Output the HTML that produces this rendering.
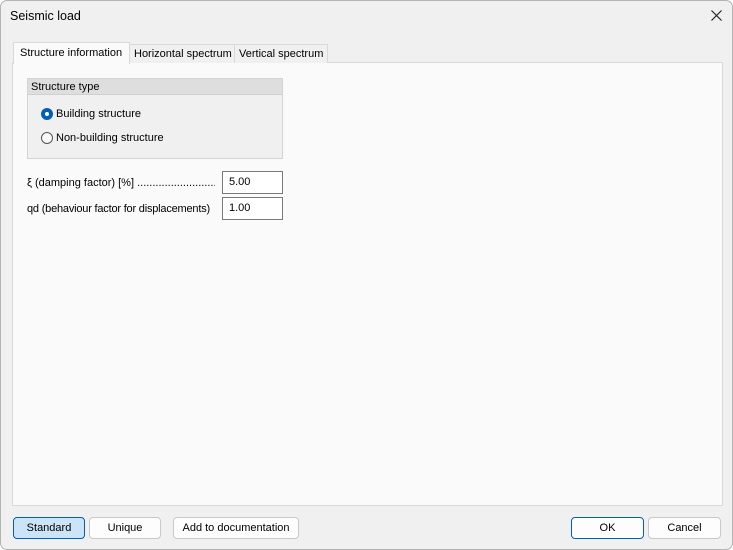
<html><head><style>
*{box-sizing:border-box}
body{margin:0;width:733px;height:550px;overflow:hidden;background:#fff;font-family:"Liberation Sans",sans-serif;font-size:11px;color:#000}
.win{position:absolute;left:0;top:0;width:733px;height:550px;border:1px solid #b4b4b4;border-radius:7px;background:#f0f0f0;overflow:hidden}
.a{position:absolute;white-space:nowrap}
.tab{position:absolute;border:1px solid #d9d9d9;border-bottom:none;background:#f0f0f0;font-size:11px;line-height:18px;padding-left:4px;white-space:nowrap}
.btn{position:absolute;top:516px;height:22px;border:1px solid #c8c8c8;border-radius:4px;background:#fdfdfd;text-align:center;line-height:21px;font-size:11px}
.inp{position:absolute;left:221px;width:61px;height:23px;border:1px solid #7a7a7a;background:#fff;padding-left:6px;line-height:20px}
</style></head><body><div class="win">
<div class="a" style="left:9px;top:8px;font-size:12.5px">Seismic load</div>
<svg class="a" style="left:709px;top:8px" width="13" height="13"><path d="M1.5 1.5L11.5 11.5M11.5 1.5L1.5 11.5" stroke="#222" stroke-width="1.2"/></svg>
<div class="a" style="left:11px;top:61px;width:711px;height:444px;border:1px solid #d9d9d9;background:#fafafa"></div>
<div class="tab" style="left:128px;top:43px;width:106px;height:19px">Horizontal spectrum</div>
<div class="tab" style="left:233px;top:43px;width:94px;height:19px">Vertical spectrum</div>
<div class="tab" style="left:12px;top:41px;width:117px;height:22px;background:#fafafa;line-height:21px;padding-left:6px">Structure information</div>
<div class="a" style="left:26px;top:77px;width:256px;height:81px;border:1px solid #d4d4d4;background:#f0f0f0"></div>
<div class="a" style="left:27px;top:78px;width:254px;height:16px;background:#dedede;border-bottom:1px solid #d0d0d0;padding-left:3px;line-height:16px">Structure type</div>
<div class="a" style="left:40px;top:107px;width:12px;height:12px;border-radius:50%;background:#005fb8"></div>
<div class="a" style="left:44px;top:111px;width:4px;height:4px;border-radius:50%;background:#fff"></div>
<div class="a" style="left:55px;top:107px">Building structure</div>
<div class="a" style="left:40px;top:131px;width:12px;height:12px;border-radius:50%;border:1px solid #555;background:#f8f8f8"></div>
<div class="a" style="left:55px;top:131px">Non-building structure</div>
<div class="a" style="left:26px;top:176px">ξ (damping factor) [%] ...............................</div>
<div class="a" style="left:26px;top:202px;letter-spacing:-0.2px">qd (behaviour factor for displacements)</div>
<div class="a" style="left:214px;top:172px;width:7px;height:20px;background:#fafafa"></div>
<div class="inp" style="top:170px">5.00</div>
<div class="inp" style="top:196px">1.00</div>
<div class="btn" style="left:12px;width:72px;background:#cce4f7;border-color:#005fb8">Standard</div>
<div class="btn" style="left:88px;width:72px">Unique</div>
<div class="btn" style="left:172px;width:126px">Add to documentation</div>
<div class="btn" style="left:570px;width:73px;border-color:#005fb8">OK</div>
<div class="btn" style="left:647px;width:73px">Cancel</div>
</div></body></html>
